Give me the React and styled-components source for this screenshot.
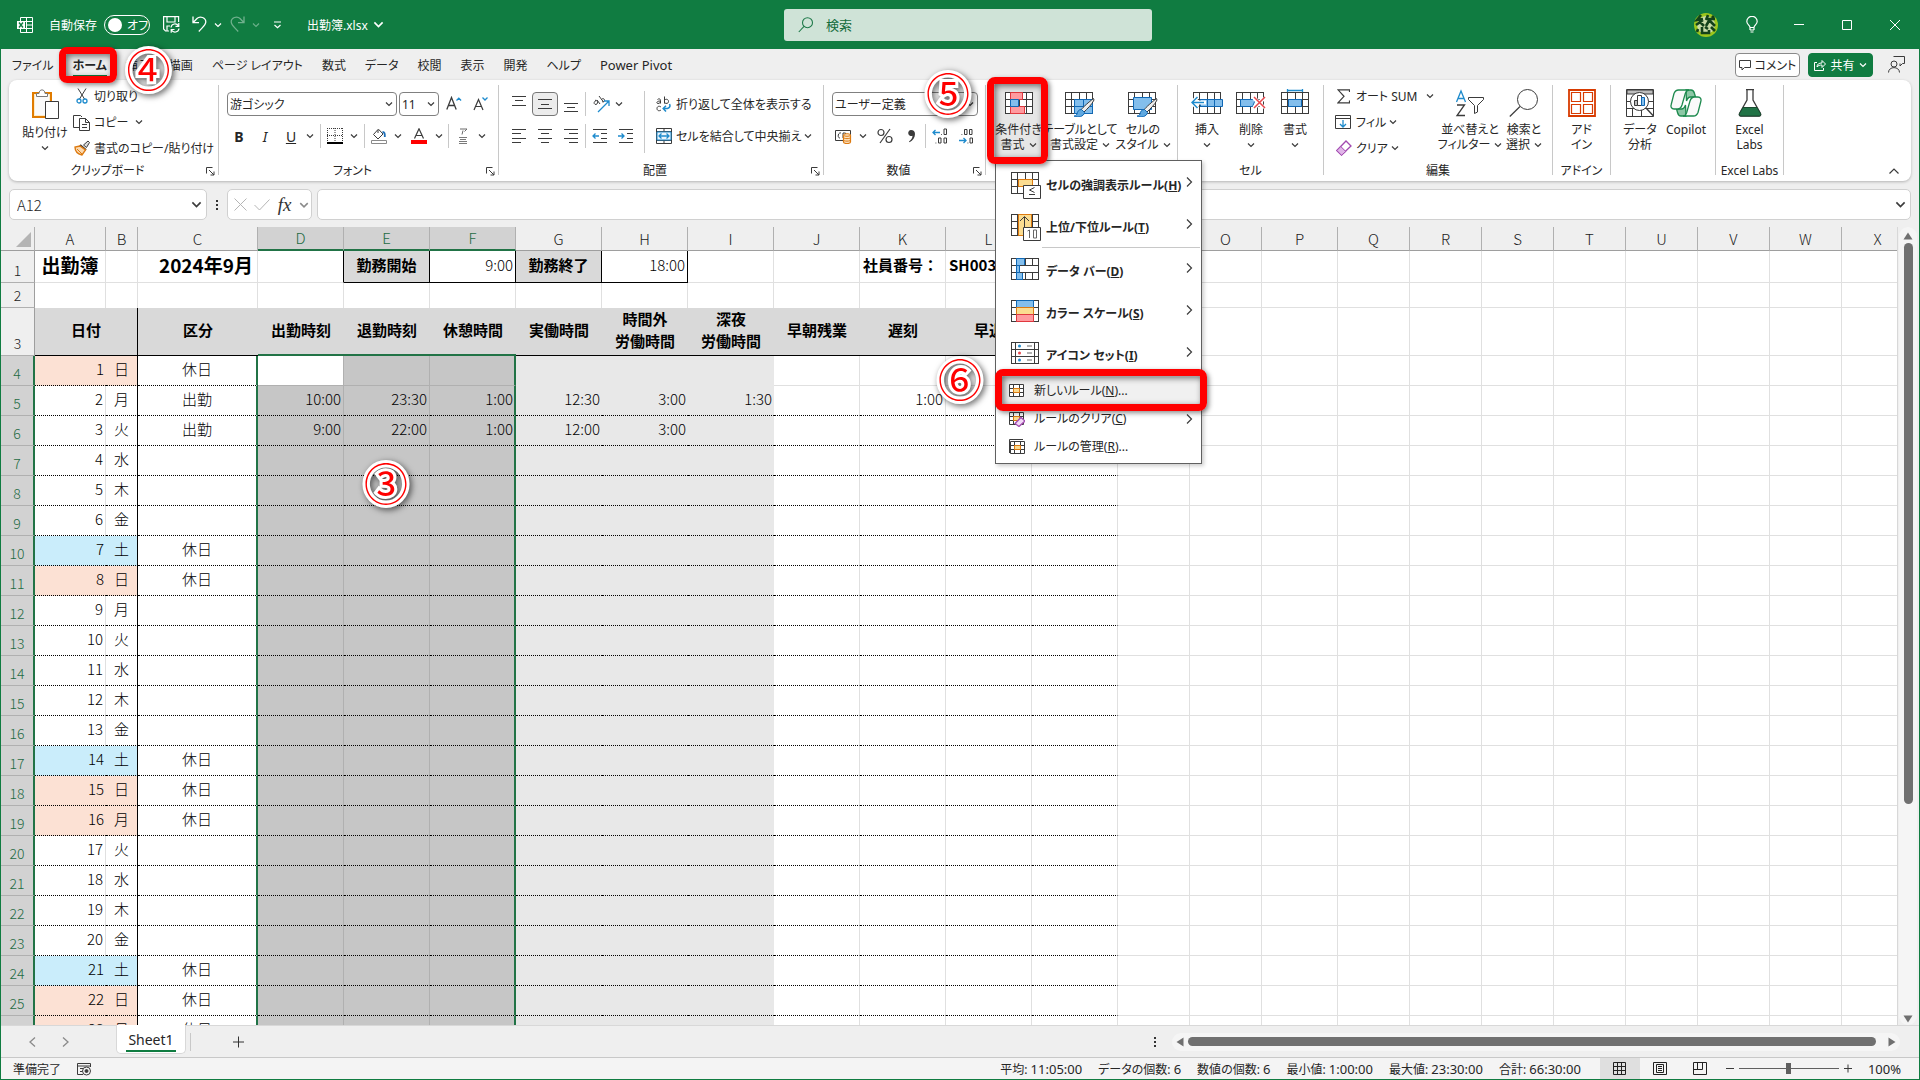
import styled, { createGlobalStyle, css } from "styled-components";

const GREEN = "#107c41";
const INK = "#3b3b3b";

const GlobalStyle = createGlobalStyle`
  * { box-sizing: border-box; }
  body {
    margin: 0;
    color: #262626;
    background: #efefef;
    font-family: "Noto Sans", "Noto Sans CJK JP", sans-serif;
    font-size: 12px;
    font-feature-settings: "palt";
  }
  button, input, select {
    margin: 0;
    padding: 0;
    border: 0;
    background: none;
    color: inherit;
    font: inherit;
    font-feature-settings: inherit;
  }
`;

/* ---------- icons ---------- */

const Svg = ({ w = 16, h = 16, children }) => (
  <svg width={w} height={h} viewBox={`0 0 ${w} ${h}`} fill="none" stroke={INK} aria-hidden="true">
    {children}
  </svg>
);

const Chevron = ({ size = 8, color = INK }) => (
  <svg width={size} height={size} viewBox="0 0 8 8" fill="none" stroke={color} strokeWidth="1.2" aria-hidden="true">
    <path d="M1 2.5 4 5.5 7 2.5" />
  </svg>
);

const ExcelLogo = () => (
  <svg width="16" height="16" viewBox="0 0 16 16" fill="none" stroke="#fff" aria-hidden="true">
    <path d="M3.5 4V.5h12v15h-12V12M9.5.5v15M3.5 4.5h12M9 8h6.5M3.5 11.5h12" />
    <path d="M0 4h8v8H0z" fill="#fff" stroke="none" />
    <path d="m2 5.5 4 5M6 5.5l-4 5" stroke={GREEN} strokeWidth="1.4" />
  </svg>
);

const SaveIcon = () => (
  <svg width="17" height="17" viewBox="0 0 17 17" fill="none" stroke="#fff" strokeWidth="1.2" aria-hidden="true">
    <path d="M6 15H2.5L.6 13V.6h15V6M4 .6V6h8V.6M4 15V10h3" />
    <path d="M8 11.5a4 4 0 0 1 7.5-1.5M15.8 7v3.3h-3.3M16 12.5A4 4 0 0 1 8.5 14M8.2 16.8v-3.3h3.3" />
  </svg>
);

const UndoIcon = ({ flip }) => (
  <svg width="15" height="17" viewBox="0 0 15 17" fill="none" stroke="#fff" strokeWidth="1.3" opacity={flip ? 0.4 : 1} aria-hidden="true">
    {flip ? (
      <path d="M14 .5v6.2H8M13.8 6.5 10 2.5C7-.3 1.2 1.5 1.2 6c0 3 3 5 7 9.5" />
    ) : (
      <path d="M1 .5v6.2h6M1.2 6.5 5 2.5c3-2.8 8.8-1 8.8 3.5 0 3-3 5-7 9.5" />
    )}
  </svg>
);

const CustomizeIcon = () => (
  <svg width="9" height="8" viewBox="0 0 9 8" fill="none" stroke="#fff" strokeWidth="1.2" aria-hidden="true">
    <path d="M1 1h7M1.5 4 4.5 6.8 7.5 4" />
  </svg>
);

const SearchIcon = () => (
  <svg width="16" height="16" viewBox="0 0 16 16" fill="none" stroke="#1f7a4a" strokeWidth="1.1" aria-hidden="true">
    <circle cx="9.5" cy="5.7" r="5" />
    <path d="M6 9.3.8 15" />
  </svg>
);

const Avatar = () => (
  <svg width="24" height="24" viewBox="0 0 24 24" fill="none" role="img" aria-label="アカウント">
    <circle cx="12" cy="12" r="12" fill="#9dc61c" />
    <circle cx="12" cy="12" r="9" fill="#c9dba8" />
    <path
      d="M7 2 3 7l6-1M9 7l-7 5M5 8l5 5M14 2l-2 5M12 6h9M16 6l-4 7M15 7l6 6M4 16l-1 3M8 14v6h7v-3M11 14l3 2M17 14l4 4M4 5l3 2M18 3l2 2"
      stroke="#14421a"
      strokeWidth="2.6"
    />
  </svg>
);

const BulbIcon = () => (
  <svg width="12" height="17" viewBox="0 0 12 17" fill="none" stroke="#fff" strokeWidth="1.2" aria-hidden="true">
    <path d="M4 11.5C4 9 .8 8.5.8 5.5a5.2 5.2 0 0 1 10.4 0C11.2 8.5 8 9 8 11.5zM4 14h4M4.5 16h3M4 11.5V14M8 11.5V14" />
  </svg>
);

const PasteIcon = () => (
  <Svg w={28} h={31}>
    <path d="M2 4h18v24H2z" stroke="#e07b00" strokeWidth="2" fill="#fdebc8" />
    <path d="M4 6h14v20H4z" fill="#fafafa" stroke="none" />
    <path d="M5.5 7.5V4.5H8C8-.3 14-.3 14 4.5h2.5v3z" fill="#fff" stroke="#7a7a7a" />
    <path d="M14.5 12.5h13v17h-13z" fill="#fff" />
  </Svg>
);

const CutIcon = () => (
  <Svg w={12} h={16}>
    <path d="M2 .5 8.5 11M10 .5 3.5 11" />
    <circle cx="3" cy="13" r="2" stroke="#1e8bcd" strokeWidth="1.3" />
    <circle cx="9" cy="13" r="2" stroke="#1e8bcd" strokeWidth="1.3" />
  </Svg>
);

const CopyIcon = () => (
  <Svg w={17} h={17}>
    <path d="M6 13.5H.5v-12h7L9 3" />
    <path d="M6.5 4.5h6l4 4v8h-10zM12.5 4.5v4h4M9 10.5h5M9 13.5h5" fill="#fff" />
  </Svg>
);

const BrushIcon = () => (
  <Svg w={16} h={16}>
    <path d="m9.5 5 4.5-4 1.5 1.5-3 5z" fill="#ddd" />
    <path d="m6 5 6 5" strokeWidth="2" />
    <path d="M6 6 1 7c0 4 3 7 7 8l3.500-5z" fill="#fbd9b0" stroke="#dd7a10" strokeWidth="1.4" />
    <path d="m3 9 5 5" stroke="#dd7a10" />
  </Svg>
);

const GrowFont = ({ down }) => (
  <Svg w={16} h={16}>
    {down ? (
      <>
        <path d="M1 14 5.5 3.5 10 14M2.5 10.500h6" strokeWidth="1.2" />
        <path d="m9.5 1.5 2.5 2.5 2.5-2.5" stroke="#1e8bcd" strokeWidth="1.3" />
      </>
    ) : (
      <>
        <path d="M.8 13.5 5.5 1.5l4.7 12M2.5 9.5h6" strokeWidth="1.3" />
        <path d="m10.5 4.5 2.3-2.3 2.3 2.3" stroke="#1e8bcd" strokeWidth="1.3" />
      </>
    )}
  </Svg>
);

const BorderIcon = () => (
  <Svg w={16} h={16}>
    <path d="M.5 0v14M15.5 0v14M8 0v14M0 .5h16M0 7.5h16" strokeDasharray="1 1" />
    <path d="M0 15h16" stroke="#000" strokeWidth="2" />
  </Svg>
);

const FillIcon = () => (
  <Svg w={16} h={16}>
    <path d="m7 1.5-4.5 5L7 11l5-5L7.5 1.2M7 1.5V5" />
    <path d="M11.5 4c2 0 2.5 1.5 2.3 5" stroke="#1e6fb8" strokeWidth="1.8" />
    <path d="M.5 12.5h15v3H.5z" stroke="#8a8a8a" fill="#fff" />
  </Svg>
);

const FontColorIcon = () => (
  <Svg w={16} h={16}>
    <path d="M3.5 10.5 8 .8l4.5 9.7M5 7.5h6" strokeWidth="1.2" />
    <path d="M0 12h16v4H0z" fill="#f00" stroke="none" />
  </Svg>
);

const RubyIcon = () => (
  <Svg w={10} h={16}>
    <path d="M2 1h7L6.500 3.500M5 2.500 4 6.500" stroke="#6a6a6a" />
    <path d="M1 9.500h8M2 11.500h6M1 13.500h8M1 15.500h8" stroke="#7a7a7a" shapeRendering="crispEdges" />
  </Svg>
);

const LINES = {
  left: "M1 1.5h14M1 5.5h9M1 10.5h14M1 14.5h9",
  center: "M1 1.5h14M4 5.5h8M1 10.5h14M4 14.5h8",
  right: "M1 1.5h14M6 5.5h9M1 10.5h14M6 14.5h9",
  vtop: "M1 .5h14M4 4.5h8M1 9.5h14",
  vmid: "M1 3.5h14M4 8.5h8M1 12.5h14",
  vbottom: "M1 7.5h14M4 11.5h8M1 15.5h14",
};

const LinesIcon = ({ kind }) => (
  <Svg>
    <path d={LINES[kind]} shapeRendering="crispEdges" />
  </Svg>
);

const IndentIcon = ({ out }) => (
  <Svg>
    <path d="M1 1.5h14M9 5.5h6M9 10.5h6M1 14.5h14" shapeRendering="crispEdges" />
    <path d={out ? "M7 8H1M3.500 5.500 1 8l2.500 2.500" : "M0 8h6M3.500 5.500 6 8l-2.500 2.500"} stroke="#1e8bcd" strokeWidth="1.3" />
  </Svg>
);

const OrientIcon = () => (
  <Svg w={17} h={17}>
    <path d="M3 4.500c-2 1-2.500 3-1 3.800s3-1 2.500-2.500S3 4 2 4.500M4 4l3 4M6 0l4.500 6M8.500 3.500c1-1.500 3-1 3 .800s-2 2-2.500 1" />
    <path d="M5 16 15.500 5.500M11 5h5v5" stroke="#1e8bcd" strokeWidth="1.3" />
  </Svg>
);

const WrapIcon = () => (
  <Svg w={16} h={17}>
    <path d="M1.500 3.500c1-1 3-1 3 1v3M4.500 5c-4-.2-4.500 2.500-2.500 2.500 1.500 0 2.500-1 2.500-2M8.500.5v7M8.500 4c2-1.500 4-.5 4 1.500s-2 2.500-4 1.300M5 11c-2-1.500-4-.5-4 1.500s2 3 4 1.500" />
    <path d="M13.500 8c1.500 3-.5 5-6 4.500M10 9.800l-2.800 2.700 2.800 3" stroke="#1e8bcd" strokeWidth="1.5" />
  </Svg>
);

const MergeIcon = () => (
  <Svg>
    <path d="M.5.5h15v15H.5zM.5 3.5h15M.5 12.5h15M8 0v3M8 13v3" />
    <path d="M1 4h14v8H1z" fill="#eaf4fb" stroke="#1e8bcd" />
    <path d="M3 8h10M5.5 5.500 3 8l2.500 2.500M10.500 5.500 13 8l-2.500 2.500" stroke="#1e8bcd" strokeWidth="1.3" />
  </Svg>
);

const CurrencyIcon = () => (
  <Svg w={18} h={16}>
    <path d="M.5 2.5h15v10H.5zM6 5c-3-1-4 5-1 5M8 10V5h2.500v2.500H8" />
    <path d="M8.500 7v7c0 2 7 2 7 0V7" fill="#fce3c3" stroke="#dd7a10" strokeWidth="1.2" />
    <ellipse cx="12" cy="7" rx="3.5" ry="1.3" fill="#fce3c3" stroke="#dd7a10" />
    <path d="M8.500 9.500c0 1.500 7 1.500 7 0M8.500 12c0 1.500 7 1.500 7 0" stroke="#dd7a10" />
  </Svg>
);

const PercentIcon = () => (
  <Svg>
    <circle cx="4" cy="4.5" r="3" strokeWidth="1.2" />
    <circle cx="12" cy="11.5" r="3" strokeWidth="1.2" />
    <path d="M13 1 3 15" strokeWidth="1.2" />
  </Svg>
);

const CommaIcon = () => (
  <Svg w={9} h={14}>
    <path d="M4 1a3 3 0 1 0 1.500 5.700C5.500 9 4 11 2 12.500l.5.8C6 11.500 8 8.500 8 5 8 2.500 6.500 1 4 1z" fill={INK} stroke="none" />
  </Svg>
);

const DecimalIcon = ({ less }) => (
  <Svg>
    {less ? (
      <>
        <path d="M3.500 6.500h.8M6.500 1.500H9v5H6.500zM11.500 1.500H14v5h-2.500zM12 10h2.500v5H12zM9.500 15h.8" />
        <path d="M1 12.500h7M5.500 10 8 12.500 5.500 15" stroke="#1e8bcd" strokeWidth="1.3" />
      </>
    ) : (
      <>
        <path d="M9 6.500h.8M12 1h2.500v5.500H12zM3.500 15h.8M6.500 10H9v5H6.500zM12 10h2.500v5H12z" />
        <path d="M8 4.500H1M3.500 2 1 4.500 3.500 7" stroke="#1e8bcd" strokeWidth="1.3" />
      </>
    )}
  </Svg>
);

const Grid = () => (
  <path
    d="M.5.5h27v21H.5zM.5 7.5h27M.5 14.5h27M6.5.5v21M14.5.5v21M21.5.5v21"
    fill="#fff"
    shapeRendering="crispEdges"
  />
);

const CondIcon = () => (
  <Svg w={28} h={28}>
    <g transform="translate(0 3)">
      <Grid />
      <path d="M5.5.5h12v7h-12zM5.5 14.5h14v7h-14z" fill="#ff9a9f" stroke="#e0383e" />
      <path d="M5.5 7.5h8v7h-8z" fill="#83beec" stroke="#1068b5" />
    </g>
  </Svg>
);

const BrushOver = () => (
  <>
    <path d="M28.5 9.500C24 13 18 18 16 21l2.500 2.500C22 20 27 15.500 29 11z" fill="#eee" />
    <path d="M16.500 20.500c-3 0-4 2-4.500 4.500-.5 1.500-2 2-3 2 4 2 10 .5 10.500-3.500z" fill="#5fa8df" stroke="#1068b5" />
  </>
);

const TableFormatIcon = () => (
  <Svg w={30} h={28}>
    <g transform="translate(0 3)">
      <Grid />
      <path d="M9.500 7.500h18v14h-18zM9.500 14.500h18M18.500 7.500v14" fill="#83beec" stroke="#1068b5" />
    </g>
    <BrushOver />
  </Svg>
);

const CellStyleIcon = () => (
  <Svg w={30} h={28}>
    <g transform="translate(0 3)">
      <Grid />
      <path d="M5.5 5.5h18v12h-18z" fill="#83beec" stroke="#1068b5" />
    </g>
    <BrushOver />
  </Svg>
);

const InsertIcon = () => (
  <Svg w={32} h={28}>
    <g transform="translate(2 3)">
      <Grid />
      <path d="M7.500 7.500h22v7h-22zM14.500 7.500v7M21.500 7.500v7" fill="#83beec" stroke="#1068b5" />
    </g>
    <path d="M15 13.500H1M6.500 8 1 13.500 6.500 19" stroke="#fff" strokeWidth="4" />
    <path d="M13 13.500H1M6.500 8 1 13.500 6.500 19" stroke="#1e8bcd" strokeWidth="1.5" />
  </Svg>
);

const DeleteIcon = () => (
  <Svg w={30} h={28}>
    <g transform="translate(0 3)">
      <Grid />
      <path d="M4.500 7.500h15l-3 7h-12z" fill="#83beec" stroke="#1068b5" />
    </g>
    <path d="m18 9 10 10M28 9 18 19" stroke="#fff" strokeWidth="4" />
    <path d="m18 8 11 11M29 8 18 19" stroke="#e8474c" strokeWidth="1.5" />
  </Svg>
);

const FormatIcon = () => (
  <Svg w={28} h={28}>
    <path d="M6.500 1.500h15M6.500-1v4M21.500-1v4" stroke="#1e8bcd" strokeWidth="1.3" />
    <g transform="translate(0 3)">
      <Grid />
      <path d="M7.500 7.500h13v7h-13z" fill="#83beec" stroke="#1068b5" />
    </g>
  </Svg>
);

const SigmaIcon = () => (
  <Svg w={13} h={15}>
    <path d="M12.500 3V.8H1l6 6.500-6 6.500h11.500v-2.300" strokeWidth="1.2" />
  </Svg>
);

const FillDownIcon = () => (
  <Svg w={17} h={16}>
    <path d="M.5 1.5h15v13H.5zM.5 4.500h15" />
    <path d="M8 6v7M5 10l3 3 3-3" stroke="#1e8bcd" strokeWidth="1.3" />
  </Svg>
);

const EraserIcon = () => (
  <Svg>
    <path d="M.8 10.500 10 1l5 5-9.500 9z" fill="#fff" stroke="#a24ab0" strokeWidth="1.3" />
    <path d="m.8 10.500 4-4 5 5-4.300 3.800z" fill="#e0b5e8" stroke="#a24ab0" />
  </Svg>
);

const SortIcon = () => (
  <Svg w={30} h={28}>
    <path d="m1.500 13 4.500-11 4.500 11M3 9.500h6" stroke="#1e8bcd" strokeWidth="1.3" />
    <path d="M2 16h7.500L2 26.500h8" strokeWidth="1.3" />
    <path d="M13.500 8.500h15v2l-6 6V23l-3 1.500v-8l-6-6z" />
  </Svg>
);

const FindIcon = () => (
  <Svg w={30} h={28}>
    <circle cx="18.5" cy="10.5" r="10" />
    <path d="M11 17.500.8 27.500" strokeWidth="1.2" />
  </Svg>
);

const AddinIcon = () => (
  <Svg w={28} h={28}>
    <path d="M1 1h26v26H1z" stroke="#d83b01" strokeWidth="1.8" />
    <path d="M3.500 3.500h9v9h-9zM15.500 3.500h9v9h-9zM3.500 15.500h9v9h-9zM15.500 15.500h9v9h-9z" stroke="#d83b01" strokeWidth="1.2" />
  </Svg>
);

const AnalyzeIcon = () => (
  <Svg w={28} h={28}>
    <path d="M.5.5h27v27H.5zM.5 12.500h27M.5 19.500h27M6.500 20v8M15.500 20v8" />
    <path d="M1 1h26v4H1z" fill="#bdbdbd" />
    <circle cx="13.5" cy="12.5" r="9" fill="#fff" />
    <path d="M8.500 11.500h3v5h-3z" fill="#bbb" />
    <path d="M11.500 6.500h4v10h-4z" fill="#fff" />
    <path d="M15.500 8.500h3v8h-3z" fill="#83beec" stroke="#1068b5" />
    <path d="m20 19 7.500 8" strokeWidth="1.4" />
  </Svg>
);

const CopilotIcon = () => (
  <svg width="32" height="28" viewBox="0 0 32 28" fill="#fafafa" stroke="#1d8a4e" strokeWidth="1.3" aria-hidden="true">
    <path d="M16 1h5c2 0 3 1.500 3.500 3.500L25.500 8h-5c-2 0-3 1-4 4z" fill="#8cc7a5" />
    <path d="M16 27h-5c-2 0-3-1.500-3.500-3.500L6.500 20h5c2 0 3-1 4-4z" fill="#8cc7a5" />
    <path d="M8.500 1H19c-2 0-3 1.500-3.700 3.500L12 16c-.8 2.500-2 4-4.500 4H4c-2.500 0-3.500-2-2.800-4.500L4 4.500C5 2 6.500 1 8.500 1z" />
    <path d="M23.500 27H13c2 0 3-1.500 3.700-3.500L20 12c.8-2.500 2-4 4.500-4H28c2.500 0 3.500 2 2.800 4.500L28 23.500c-1 2.500-2.500 3.500-4.500 3.500z" />
  </svg>
);

const LabsIcon = () => (
  <Svg w={26} h={28}>
    <path d="M9 .7h8M10 1v10L2.500 24.500C2 26 2.500 27 4 27h18c1.500 0 2-1 1.500-2.500L16 11V1" strokeWidth="1.3" />
    <path d="M6 18.500h14l3.500 6c.5 1.500 0 2.500-1.500 2.500H4c-1.500 0-2-1-1.500-2.500z" fill="#217346" stroke="#1b4a30" />
  </Svg>
);

const LauncherIcon = () => (
  <Svg w={9} h={9}>
    <path d="M.5 6.500v-6h6M3 3l5 5M8 4.500V8H4.500" />
  </Svg>
);

const RuleGrid = ({ children }) => (
  <Svg w={30} h={28}>
    <Grid />
    {children}
  </Svg>
);

const HighlightRuleIcon = () => (
  <RuleGrid>
    <path d="M7.500 7.500h14v7h-14z" fill="#fbdc90" stroke="#dd7a10" />
    <path d="M12.500 13.500h17v13h-17z" fill="#fff" />
    <path d="m23.500 15.500-5 2.500 5 2.500M18 22.500h6" />
  </RuleGrid>
);

const TopRuleIcon = () => (
  <RuleGrid>
    <path d="M7.500.5h13v21h-13z" fill="#fbdc90" stroke="#dd7a10" />
    <path d="M13.500 14V3M9 7l4.500-4.500L18 7" />
    <path d="M12.500 13.500h17v13h-17z" fill="#fff" />
    <path d="m16.500 17 2-1v8M22.500 16h3v8h-3z" stroke="#666" />
  </RuleGrid>
);

const DataBarIcon = () => (
  <RuleGrid>
    <path d="M9 7.500h13v7H9z" fill="#fff" stroke="none" />
    <path d="M5.500.5h8v7h-8zM5.500 7.500h3v7h-3zM5.500 14.500h6v7h-6z" fill="#83beec" stroke="#1068b5" />
    <path d="M9 7.500h13M9 14.500h13" />
  </RuleGrid>
);

const ColorScaleIcon = () => (
  <RuleGrid>
    <path d="M5.500.5h17v7h-17z" fill="#83beec" stroke="#1068b5" />
    <path d="M5.500 7.500h17v7h-17z" fill="#fbdc90" stroke="#dd7a10" />
    <path d="M5.500 14.500h17v7h-17z" fill="#ff9a9f" stroke="#e0383e" />
  </RuleGrid>
);

const IconSetIcon = () => (
  <Svg w={30} h={28}>
    <path d="M.5.5h27v21H.5zM.5 7.5h27M.5 14.500h27M4.500.5v21M23.500.5v21" fill="#fff" shapeRendering="crispEdges" />
    <circle cx="8.5" cy="4" r="1.5" fill="#1e8bcd" stroke="none" />
    <circle cx="8.5" cy="11" r="1.5" fill="#e8474c" stroke="none" />
    <circle cx="8.5" cy="18" r="1.5" fill="#1e8bcd" stroke="none" />
    <path d="M16 4h5M16 11h5M16 18h5" stroke="#666" />
  </Svg>
);

const SmallRuleIcon = ({ kind }) => (
  <Svg>
    {kind === "manage" && <path d="M.5 14V.5H14" />}
    <g transform={kind === "manage" ? "translate(1 2)" : "translate(0 1)"}>
      <path d="M.5.5h14v12H.5zM.5 4.5h14M.5 8.500h14M4.500.5v12M10.500.5v12" fill="#fff" />
      <path d="M4.500 4.500h6v4h-6z" fill="#fbdc90" stroke="#dd7a10" />
    </g>
    {kind === "clear" && <path d="m6 12.500 6-6 4 3.500-6 5.500z" fill="#f3d9f7" stroke="#a24ab0" strokeWidth="1.3" />}
  </Svg>
);

/* ---------- window frame ---------- */

const Window = styled.div`
  display: flex;
  flex-direction: column;
  height: 100vh;
  overflow: hidden;
  border: 1px solid ${GREEN};
  border-top: 0;
  background: #efefef;
`;

const TitleBar = styled.header`
  display: grid;
  grid-template-columns: 1fr 368px 1fr;
  align-items: center;
  flex: none;
  height: 49px;
  padding-left: 16px;
  background: ${GREEN};
  color: #fff;
`;

const TitleSide = styled.div`
  display: flex;
  align-items: center;
  justify-content: ${(p) => (p.$end ? "flex-end" : "flex-start")};
  white-space: nowrap;
`;

const TitleButton = styled.button`
  display: flex;
  align-items: center;
  justify-content: center;
  width: ${(p) => p.$w}px;
  height: 32px;
`;

const FileName = styled.button`
  display: flex;
  align-items: center;
  gap: 5px;
  margin-left: 13px;
`;

const AutoSave = styled.label`
  display: flex;
  align-items: center;
  gap: 7px;
  margin: 0 8px 0 16px;
`;

const Toggle = styled.span`
  display: flex;
  align-items: center;
  gap: 5px;
  width: 46px;
  height: 20px;
  padding-left: 3px;
  border: 1px solid #fff;
  border-radius: 10px;

  &::before {
    content: "";
    width: 14px;
    height: 14px;
    border-radius: 50%;
    background: #fff;
  }

  input {
    position: absolute;
    opacity: 0;
  }
`;

const SearchBox = styled.label`
  display: flex;
  align-items: center;
  gap: 12px;
  height: 32px;
  padding: 0 14px;
  border-radius: 3px;
  background: #cfe3d7;
  color: #146c3c;

  input {
    flex: 1;
    font-size: 13px;
    outline: 0;
  }
  input::placeholder {
    color: #146c3c;
    opacity: 1;
  }
`;

/* ---------- tabs ---------- */

const TabRow = styled.nav`
  display: flex;
  align-items: center;
  flex: none;
  height: 31px;
  padding: 0 13px 0 11px;
`;

const Tab = styled.button`
  height: 24px;
  margin-right: 19px;
  font-size: ${(p) => (p.$latin ? 13 : 12)}px;
  white-space: nowrap;

  ${(p) =>
    p.$active &&
    css`
      font-weight: bold;
      box-shadow: inset 0 -2px ${GREEN};
    `}
`;

const TabTools = styled.div`
  display: flex;
  align-items: center;
  gap: 8px;
  margin-left: auto;
`;

const PillButton = styled.button`
  display: flex;
  align-items: center;
  justify-content: center;
  gap: 4px;
  width: 65px;
  height: 24px;
  border: 1px solid ${(p) => (p.$solid ? GREEN : "#8a8a8a")};
  border-radius: 4px;
  background: ${(p) => (p.$solid ? GREEN : "#fff")};
  color: ${(p) => (p.$solid ? "#fff" : "#262626")};
  white-space: nowrap;
`;

const PersonButton = styled.button`
  display: flex;
  justify-content: center;
  width: 20px;
  margin-left: 5px;
`;

/* ---------- call-outs ---------- */

const Frame = styled.span`
  position: absolute;
  z-index: 5;
  inset: ${(p) => p.$inset};
  border: 7px solid #f00;
  border-radius: 8px;
  box-shadow: 2px 2px 5px rgba(0, 0, 0, 0.45), inset 2px 2px 6px rgba(0, 0, 0, 0.55);
  pointer-events: none;
`;

const Step = styled.span`
  position: absolute;
  z-index: 6;
  left: ${(p) => p.$x}px;
  top: ${(p) => p.$y}px;
  color: #f00;
  font: 400 44px/44px "Noto Sans CJK JP", sans-serif;
  font-feature-settings: normal;
  -webkit-text-stroke: 6px #fff;
  paint-order: stroke fill;
  filter: drop-shadow(2px 2px 3px rgba(0, 0, 0, 0.6));
  pointer-events: none;
`;

/* ---------- ribbon ---------- */

const Ribbon = styled.section`
  display: flex;
  flex: none;
  height: 101px;
  margin: 0 8px;
  border-radius: 8px;
  background: #fff;
  box-shadow: 0 1px 3px rgba(0, 0, 0, 0.25);
`;

const GroupBox = styled.div`
  display: flex;
  flex-direction: column;
  flex: none;
  min-width: ${(p) => p.$w}px;
  padding: 3px 0 2px;
`;

const GroupBody = styled.div`
  display: flex;
  height: 78px;
  padding-left: ${(p) => p.$pad}px;
  justify-content: ${(p) => (p.$center ? "center" : "flex-start")};
`;

const GroupFoot = styled.div`
  display: flex;
  align-items: center;
  height: 18px;

  span {
    flex: 1;
    text-align: center;
    white-space: nowrap;
  }
`;

const Launcher = styled.button`
  display: flex;
  width: 12px;
  padding-top: 2px;
`;

const GroupRule = styled.div`
  width: 1px;
  margin: 5px 0 6px;
  background: #c8c8c8;
`;

const Group = ({ w, pad = 0, label, launcher, center, children }) => (
  <>
    <GroupBox $w={w}>
      <GroupBody $pad={pad} $center={center}>
        {children}
      </GroupBody>
      <GroupFoot>
        <span>{label}</span>
        {launcher && (
          <Launcher aria-label={`${label} の詳細`}>
            <LauncherIcon />
          </Launcher>
        )}
      </GroupFoot>
    </GroupBox>
    <GroupRule />
  </>
);

const BigButton = styled.button`
  display: flex;
  flex-direction: column;
  align-items: center;
  width: ${(p) => p.$w}px;
  height: 78px;
  padding-top: 6px;
  background: ${(p) => (p.$pressed ? "#e6e6e6" : "none")};
  line-height: 15px;
  white-space: nowrap;

  > svg:first-child {
    flex: none;
    margin-bottom: 5px;
  }
`;

const Line = styled.span`
  display: flex;
  align-items: center;
  justify-content: center;
  gap: 4px;
  height: 15px;
`;

const Big = ({ w, icon, lines = [], drop, pressed }) => (
  <BigButton $w={w} $pressed={pressed}>
    {icon}
    {lines.map((text, i) => (
      <Line key={text}>
        {text}
        {drop === "inline" && i === lines.length - 1 && <Chevron />}
      </Line>
    ))}
    {drop === "below" && (
      <Line>
        <Chevron />
      </Line>
    )}
  </BigButton>
);

const Anchor = styled.div`
  position: relative;
`;

const SmallStack = styled.div`
  display: flex;
  flex-direction: column;
  width: ${(p) => p.$w}px;
`;

const SmallButton = styled.button`
  display: flex;
  align-items: center;
  height: 26px;
  white-space: nowrap;

  > svg:last-child {
    margin-left: ${(p) => p.$gap}px;
  }
`;

const IconSlot = styled.span`
  display: flex;
  flex: none;
  justify-content: center;
  width: 17px;
  margin-right: 4px;
`;

const Small = ({ icon, label, drop, gap = 3 }) => (
  <SmallButton $gap={gap}>
    <IconSlot>{icon}</IconSlot>
    {label}
    {drop && <Chevron />}
  </SmallButton>
);

const ToolRows = styled.div`
  display: flex;
  flex-direction: column;
  gap: 8px;
  padding-top: 9px;
`;

const ToolRow = styled.div`
  display: flex;
  align-items: center;
  height: 24px;
`;

const Tool = styled.button`
  display: flex;
  align-items: center;
  justify-content: center;
  width: ${(p) => p.$w}px;
  height: 24px;
  border-radius: 4px;
  font-size: 14px;

  svg {
    flex: none;
  }

  ${(p) =>
    p.$on &&
    css`
      border: 1px solid #767676;
      background: #ececec;
    `}
`;

const ToolRule = styled.span`
  width: 1px;
  height: 24px;
  margin: 0 ${(p) => p.$m || 3}px;
  background: #c8c8c8;
`;

const BlockRule = styled.span`
  width: 1px;
  height: 62px;
  margin: 8px 10px 0 5px;
  background: #c8c8c8;
`;

const Combo = styled.label`
  display: flex;
  align-items: center;
  width: ${(p) => p.$w}px;
  height: 24px;
  margin-right: ${(p) => p.$gap || 0}px;
  padding: 0 3px 0 2px;
  border: 1px solid #808080;
  border-radius: 4px;

  select {
    flex: 1;
    min-width: 0;
    appearance: none;
    outline: 0;
  }
`;

const CollapseButton = styled.button`
  display: flex;
  align-self: flex-end;
  margin-left: auto;
  padding: 0 12px 7px;
`;

/* ---------- rule menu ---------- */

const Menu = styled.div`
  position: absolute;
  z-index: 4;
  top: 77px;
  left: 0;
  width: 207px;
  padding: 2px 0;
  border: 1px solid #606060;
  background: #fff;
  box-shadow: 2px 2px 4px rgba(0, 0, 0, 0.2);
`;

const MenuLarge = styled.button`
  display: flex;
  width: 100%;
  height: 42px;
  padding: 9px 8px 0 15px;
  font-weight: bold;
  line-height: 28px;
  text-align: left;
  white-space: nowrap;

  svg {
    flex: none;
  }
  span {
    flex: 1;
    margin-left: 5px;
  }
`;

const MenuSmall = styled(MenuLarge)`
  align-items: center;
  height: 28px;
  padding: 0 8px 0 13px;
  font-weight: normal;
  background: ${(p) => (p.$hover ? "#f0f0f0" : "none")};

  span {
    margin-left: 9px;
  }
`;

const MenuRule = styled.div`
  height: 1px;
  margin: 0 1px 1px 46px;
  background: #c8c8c8;
`;

const SmallRules = styled.div`
  position: relative;
  padding-top: 2px;
`;

const Arrow = () => (
  <Svg w={7} h={20}>
    <path d="m1 5.500 4.500 4.500L1 14.500" strokeWidth="1.2" />
  </Svg>
);

const LARGE_RULES = [
  [HighlightRuleIcon, "セルの強調表示ルール", "H"],
  [TopRuleIcon, "上位/下位ルール", "T"],
  null,
  [DataBarIcon, "データ バー", "D"],
  [ColorScaleIcon, "カラー スケール", "S"],
  [IconSetIcon, "アイコン セット", "I"],
];

const RuleMenu = () => (
  <Menu role="menu">
    {LARGE_RULES.map((rule) => {
      if (!rule) return <MenuRule key="rule" />;
      const [Icon, text, key] = rule;
      return (
        <MenuLarge key={key} role="menuitem">
          <Icon />
          <span>
            {text}(<u>{key}</u>)
          </span>
          <Arrow />
        </MenuLarge>
      );
    })}
    <SmallRules>
      <MenuSmall role="menuitem" $hover>
        <SmallRuleIcon />
        <span>
          新しいルール(<u>N</u>)...
        </span>
      </MenuSmall>
      <Frame $inset="-6px -6px -6px -1px" />
      <Step $x={-58} $y={-19}>⑥</Step>
    </SmallRules>
    <MenuSmall role="menuitem">
      <SmallRuleIcon kind="clear" />
      <span>
        ルールのクリア(<u>C</u>)
      </span>
      <Arrow />
    </MenuSmall>
    <MenuSmall role="menuitem">
      <SmallRuleIcon kind="manage" />
      <span>
        ルールの管理(<u>R</u>)...
      </span>
    </MenuSmall>
  </Menu>
);

/* ---------- formula bar ---------- */

const FormulaBar = styled.div`
  display: flex;
  align-items: center;
  flex: none;
  padding: 8px 8px 7px;
`;

const Field = styled.div`
  display: flex;
  align-items: center;
  flex: ${(p) => (p.$grow ? 1 : "none")};
  width: ${(p) => p.$w}px;
  height: 31px;
  padding: 0 4px 0 7px;
  border: 1px solid #d0d0d0;
  border-radius: 5px;
  background: #fff;

  input {
    flex: 1;
    min-width: 0;
    font: 300 15px "Noto Sans CJK JP", sans-serif;
    outline: 0;
  }
  button {
    display: flex;
  }
`;

const FxField = styled(Field)`
  justify-content: space-between;
  padding: 0 2px 0 6px;
  margin-right: 5px;
`;

const Fx = styled.i`
  color: #333;
  font: italic 19px "Liberation Serif", serif;
`;

const Dots = styled.span`
  display: flex;
  justify-content: center;
  width: 20px;
`;

const DotsIcon = () => (
  <svg width="2" height="10" viewBox="0 0 2 10" fill="#333" aria-hidden="true">
    <path d="M0 0h2v2H0zM0 4h2v2H0zM0 8h2v2H0z" />
  </svg>
);

/* ---------- sheet ---------- */

const SheetArea = styled.main`
  position: relative;
  display: flex;
  flex: 1;
  min-height: 0;
`;

const SheetClip = styled.div`
  flex: 1;
  min-width: 0;
  overflow: hidden;
  border-right: 1px solid #d8d8d8;
  background: #fff;
`;

const Table = styled.table`
  width: 1913px;
  table-layout: fixed;
  border-collapse: separate;
  border-spacing: 0;
  color: #000;
  font: 300 15px/26px "Noto Sans CJK JP", sans-serif;
  font-feature-settings: normal;

  th, td {
    padding: 0;
    overflow: hidden;
    white-space: nowrap;
  }
`;

const ColHead = styled.th`
  height: 24px;
  border-right: 1px solid #b0b0b0;
  border-bottom: ${(p) => (p.$on ? "2px solid #217346" : "1px solid #9e9e9e")};
  background: ${(p) => (p.$on ? "#d2d2d2" : "#efefef")};
  color: ${(p) => (p.$on ? "#1e6b43" : "#222")};
  font-weight: 300;
  line-height: 20px;
`;

const Corner = styled(ColHead)`
  svg {
    display: block;
    margin: 1px 0 0 14px;
  }
`;

const RowHead = styled.th`
  height: ${(p) => p.$h}px;
  vertical-align: bottom;
  border-right: ${(p) => (p.$on ? "2px solid #217346" : "1px solid #9e9e9e")};
  border-bottom: 1px solid #b0b0b0;
  background: ${(p) => (p.$on ? "#d2d2d2" : "#efefef")};
  color: ${(p) => (p.$on ? "#1e6b43" : "#222")};
  font-size: 14px;
  font-weight: 300;
  line-height: 24px;
`;

const FILLS = {
  head: "#d9d9d9",
  sun: "#fce1d4",
  sat: "#caedfb",
  picked: "#c6c6c6",
  calc: "#e8e8e8",
};

const EDGES = {
  grid: "1px solid #e0e0e0",
  black: "1px solid #000",
  dots: "1px dotted #000",
  green: "2px solid #217346",
  grey: "1px solid #b0b0b0",
  none: "0",
};

const Cell = styled.td`
  && {
    padding: 0 ${(p) => p.$pad ?? 2}px ${(p) => (p.$short ? 0 : 3)}px;
  }
  border-right: ${(p) => EDGES[p.$right || "grid"]};
  border-bottom: ${(p) => EDGES[p.$bottom || "grid"]};
  background: ${(p) => FILLS[p.$fill] || "#fff"};
  font-size: ${(p) => (p.$title ? 19 : 15)}px;
  font-weight: ${(p) => (p.$bold || p.$title ? 700 : 300)};
  line-height: ${(p) => (p.$head ? 22 : 26)}px;
  text-align: ${(p) => p.$align || "right"};
`;

const COLS = "ABCDEFGHIJKLMNOPQRSTUVWX".split("");
const WIDTHS = { A: 71, B: 32, C: 120, N: 72, P: 76 };
const colWidth = (c) => WIDTHS[c] || (c >= "D" && c <= "M" ? 86 : 72);

const HEADINGS = {
  C: "区分",
  D: "出勤時刻",
  E: "退勤時刻",
  F: "休憩時間",
  G: "実働時間",
  H: ["時間外", "労働時間"],
  I: ["深夜", "労働時間"],
  J: "早朝残業",
  K: "遅刻",
  L: "早退",
};

const TIMES = {
  2: { D: "10:00", E: "23:30", F: "1:00", G: "12:30", H: "3:00", I: "1:30", K: "1:00" },
  3: { D: "9:00", E: "22:00", F: "1:00", G: "12:00", H: "3:00" },
};

const HOLIDAYS = [16, 23];

const dayOf = (n) => {
  const week = (n - 1) % 7;
  const red = week === 0 || HOLIDAYS.includes(n);
  return {
    n,
    name: "日月火水木金土"[week],
    fill: red ? "sun" : week === 6 ? "sat" : undefined,
    kind: red || week === 6 ? "休日" : TIMES[n] ? "出勤" : "",
  };
};

const DAYS = Array.from({ length: 23 }, (_, i) => dayOf(i + 1));

const TopCells = () => (
  <>
    <Cell $title $align="center">出勤簿</Cell>
    <Cell />
    <Cell $title $pad={4}>2024年9月</Cell>
    <Cell $right="black" />
    <Cell $fill="head" $bold $align="center" $right="black" $bottom="black">勤務開始</Cell>
    <Cell $right="black" $bottom="black">9:00</Cell>
    <Cell $fill="head" $bold $align="center" $right="black" $bottom="black">勤務終了</Cell>
    <Cell $right="black" $bottom="black">18:00</Cell>
    <Cell />
    <Cell />
    <Cell $bold $align="left" $pad={3}>社員番号：</Cell>
    <Cell $bold $align="left" $pad={3}>SH003</Cell>
    {COLS.slice(12).map((c) => (
      <Cell key={c} />
    ))}
  </>
);

const dayCell = (day, c) => {
  const first = day.n === 1;
  const text = TIMES[day.n]?.[c];
  if (c >= "D" && c <= "F")
    return (
      <Cell
        key={c}
        $fill={first && c === "D" ? undefined : "picked"}
        $right={c === "F" ? "green" : "grey"}
        $bottom={first ? "grey" : "dots"}
        $pad={c === "F" ? 1 : 2}
      >
        {text}
      </Cell>
    );
  if (c >= "G" && c <= "I")
    return (
      <Cell key={c} $fill="calc" $right="none" $bottom={first ? "none" : "dots"}>
        {text}
      </Cell>
    );
  return (
    <Cell key={c} $bottom={c <= "M" && !first ? "dots" : "grid"}>
      {text}
    </Cell>
  );
};

const Sheet = () => (
  <Table>
    <colgroup>
      <col style={{ width: 34 }} />
      {COLS.map((c) => (
        <col key={c} style={{ width: colWidth(c) }} />
      ))}
    </colgroup>
    <thead>
      <tr>
        <Corner aria-label="すべて選択">
          <svg width="17" height="17" viewBox="0 0 17 17" aria-hidden="true">
            <path d="M16 1v15H1z" fill="#b4b4b4" />
          </svg>
        </Corner>
        {COLS.map((c) => (
          <ColHead key={c} $on={c >= "D" && c <= "F"}>{c}</ColHead>
        ))}
      </tr>
    </thead>
    <tbody>
      <tr>
        <RowHead $h={32}>1</RowHead>
        <TopCells />
      </tr>
      <tr>
        <RowHead $h={25}>2</RowHead>
        {COLS.map((c) => (
          <Cell key={c} $short $bottom={c <= "M" ? "none" : "grid"} />
        ))}
      </tr>
      <tr>
        <RowHead $h={48}>3</RowHead>
        <Cell colSpan={2} $head $fill="head" $bold $align="center" $right="black" $bottom="black">日付</Cell>
        {COLS.slice(2).map((c) => {
          if (c > "M") return <Cell key={c} />;
          const text = HEADINGS[c];
          return (
            <Cell
              key={c}
              $head
              $fill="head"
              $bold
              $align="center"
              $right="none"
              $bottom={c >= "D" && c <= "F" ? "green" : "black"}
            >
              {Array.isArray(text) ? (
                <>
                  {text[0]}
                  <br />
                  {text[1]}
                </>
              ) : (
                text
              )}
            </Cell>
          );
        })}
      </tr>
      {DAYS.map((day) => (
        <tr key={day.n}>
          <RowHead $h={30} $on>{day.n + 3}</RowHead>
          <Cell $fill={day.fill} $right={day.fill ? "none" : "grid"} $bottom="dots">{day.n}</Cell>
          <Cell $fill={day.fill} $align="center" $right="black" $bottom="dots">{day.name}</Cell>
          <Cell $align="center" $right="green" $bottom="dots">{day.kind}</Cell>
          {COLS.slice(3).map((c) => dayCell(day, c))}
        </tr>
      ))}
    </tbody>
  </Table>
);

const VScroll = styled.div`
  display: flex;
  flex-direction: column;
  align-items: center;
  gap: 3px;
  flex: none;
  width: 18px;
  margin: 0 2px 0 1px;
  padding: 5px 0 2px;
  border-radius: 9px;
  background: #f5f5f5;

  button {
    display: flex;
  }
`;

const VTrack = styled.div`
  flex: 1;
  width: 9px;

  &::before {
    content: "";
    display: block;
    height: 73%;
    border-radius: 5px;
    background: #707070;
  }
`;

const Triangle = ({ turn }) => (
  <svg width="10" height="8" viewBox="0 0 10 8" fill="#707070" transform={`rotate(${turn})`} aria-hidden="true">
    <path d="M5 .5 9.500 7.500H.5z" />
  </svg>
);

/* ---------- sheet tabs and status ---------- */

const SheetTabs = styled.footer`
  display: flex;
  align-items: center;
  flex: none;
  height: 32px;
  padding: 0 19px 0 15px;
  border-top: 1px solid #d8d8d8;
`;

const TabNav = styled.button`
  display: flex;
  justify-content: center;
  width: 33px;
`;

const SheetTab = styled.button`
  align-self: flex-start;
  width: 70px;
  height: 29px;
  margin: -1px 4px 0 34px;
  padding: 0 9px;
  border: 1px solid #d8d8d8;
  border-top: 0;
  border-radius: 0 0 5px 5px;
  background: #fff;
  font-size: 14px;

  span {
    display: block;
    height: 26px;
    border-bottom: 2px solid ${GREEN};
    line-height: 27px;
  }
`;

const AddTab = styled(TabNav)`
  width: 95px;
  border-left: 1px solid #c8c8c8;
`;

const HScroll = styled.div`
  display: flex;
  align-items: center;
  gap: 3px;
  width: 728px;
  height: 18px;
  margin-left: 16px;
  padding: 0 3px;
  border-radius: 9px;
  background: #f5f5f5;

  button {
    display: flex;
  }
`;

const HThumb = styled.div`
  flex: 1;
  height: 9px;
  margin-right: 8px;
  border-radius: 5px;
  background: #707070;
`;

const Spacer = styled.span`
  flex: 1;
`;

const StatusBar = styled.footer`
  display: flex;
  align-items: center;
  gap: 16px;
  flex: none;
  height: 22px;
  padding: 0 18px 0 12px;
  border-top: 1px solid #c8c8c8;
  background: #f4f4f4;
  white-space: nowrap;
`;

const Figure = styled.span`
  font-size: 13px;
`;

const Views = styled.div`
  display: flex;
  align-self: stretch;
  margin-left: 3px;
`;

const ViewButton = styled.button`
  display: flex;
  align-items: center;
  justify-content: center;
  width: 40px;
  background: ${(p) => (p.$on ? "#dfdfdf" : "none")};
`;

const Zoom = styled.div`
  display: flex;
  align-items: center;
  gap: 5px;
  margin-left: -10px;

  button {
    display: flex;
  }
  input {
    width: 100px;
    height: 12px;
    appearance: none;
    background: linear-gradient(#606060, #606060) center / 100% 1px no-repeat;
  }
  input::-webkit-slider-thumb {
    width: 5px;
    height: 11px;
    appearance: none;
    background: #606060;
  }
`;

const TABS = ["描画", "ページ レイアウト", "数式", "データ", "校閲", "表示", "開発", "ヘルプ"];

const STATS = [
  ["平均", "11:05:00"],
  ["データの個数", "6"],
  ["数値の個数", "6"],
  ["最小値", "1:00:00"],
  ["最大値", "23:30:00"],
  ["合計", "66:30:00"],
];

export default function App() {
  return (
    <>
      <GlobalStyle />
      <Window>
        <TitleBar>
          <TitleSide>
            <ExcelLogo />
            <AutoSave>
              自動保存
              <Toggle>
                <input type="checkbox" aria-label="自動保存" />
                オフ
              </Toggle>
            </AutoSave>
            <TitleButton $w={26} aria-label="保存"><SaveIcon /></TitleButton>
            <TitleButton $w={30} aria-label="元に戻す"><UndoIcon /></TitleButton>
            <TitleButton $w={8} aria-label="元に戻す一覧"><Chevron color="#fff" /></TitleButton>
            <TitleButton $w={30} aria-label="やり直し"><UndoIcon flip /></TitleButton>
            <TitleButton $w={8} aria-label="やり直し一覧"><Chevron color="#6bb08a" /></TitleButton>
            <TitleButton $w={34} aria-label="クイック アクセスのカスタマイズ"><CustomizeIcon /></TitleButton>
            <FileName>
              出勤簿.xlsx
              <Chevron size={11} color="#fff" />
            </FileName>
          </TitleSide>
          <SearchBox>
            <SearchIcon />
            <input type="search" placeholder="検索" aria-label="検索" />
          </SearchBox>
          <TitleSide $end>
            <TitleButton $w={46}><Avatar /></TitleButton>
            <TitleButton $w={46} aria-label="ヒント"><BulbIcon /></TitleButton>
            <TitleButton $w={48} aria-label="最小化">
              <svg width="10" height="10" stroke="#fff" aria-hidden="true"><path d="M0 4.500h10" /></svg>
            </TitleButton>
            <TitleButton $w={48} aria-label="最大化">
              <svg width="10" height="10" stroke="#fff" fill="none" aria-hidden="true"><path d="M.5.5h9v9h-9z" /></svg>
            </TitleButton>
            <TitleButton $w={48} aria-label="閉じる">
              <svg width="10" height="10" stroke="#fff" aria-hidden="true"><path d="m0 0 10 10M10 0 0 10" /></svg>
            </TitleButton>
          </TitleSide>
        </TitleBar>

        <TabRow>
          <Tab>ファイル</Tab>
          <Anchor>
            <Tab $active>ホーム</Tab>
            <Frame $inset="-6px 9px -6px -14px" />
            <Step $x={54} $y={-7}>④</Step>
          </Anchor>
          <Tab>挿入</Tab>
          {TABS.map((t) => (
            <Tab key={t}>{t}</Tab>
          ))}
          <Tab $latin>Power Pivot</Tab>
          <TabTools>
            <PillButton>
              <Svg w={12} h={12}><path d="M.5 1.500h11v7h-6L3 11V8.500H.5z" /></Svg>
              コメント
            </PillButton>
            <PillButton $solid>
              <svg width="12" height="12" viewBox="0 0 12 12" fill="none" stroke="#fff" aria-hidden="true">
                <path d="M3 3.500H.5v8h9V9M3 8c0-3 2-4 5-4V1.500L11.500 5 8 8.500V6C6 6 4 6.500 3 8z" />
              </svg>
              共有
              <Chevron color="#fff" />
            </PillButton>
            <PersonButton aria-label="プレゼンス">
              <Svg w={17} h={17}>
                <path d="M5.500.5h11v7h-2l-2.500 2.500V7.500" />
                <circle cx="6" cy="8" r="3" fill="#efefef" />
                <path d="M.5 16.500c0-6.500 11-6.500 11 0" />
              </Svg>
            </PersonButton>
          </TabTools>
        </TabRow>

        <Ribbon>
          <Group w={209} pad={8} label="クリップボード" launcher>
            <Big w={56} icon={<PasteIcon />} lines={["貼り付け"]} drop="below" />
            <SmallStack $w={130}>
              <Small icon={<CutIcon />} label="切り取り" />
              <Small icon={<CopyIcon />} label="コピー" drop gap={7} />
              <Small icon={<BrushIcon />} label="書式のコピー/貼り付け" />
            </SmallStack>
          </Group>

          <Group w={279} pad={8} label="フォント" launcher>
            <ToolRows>
              <ToolRow>
                <Combo $w={170} $gap={2}>
                  <select aria-label="フォント"><option>游ゴシック</option></select>
                  <Chevron />
                </Combo>
                <Combo $w={40}>
                  <select aria-label="フォント サイズ"><option>11</option></select>
                  <Chevron />
                </Combo>
                <Tool $w={30} aria-label="拡大"><GrowFont /></Tool>
                <Tool $w={24} aria-label="縮小"><GrowFont down /></Tool>
              </ToolRow>
              <ToolRow>
                <Tool $w={24}><b>B</b></Tool>
                <Tool $w={28}><i>I</i></Tool>
                <Tool $w={24}><u>U</u></Tool>
                <Tool $w={14} aria-label="下線の種類"><Chevron /></Tool>
                <ToolRule />
                <Tool $w={22} aria-label="罫線"><BorderIcon /></Tool>
                <Tool $w={15} aria-label="罫線の種類"><Chevron /></Tool>
                <ToolRule />
                <Tool $w={22} aria-label="塗りつぶし"><FillIcon /></Tool>
                <Tool $w={15} aria-label="塗りつぶしの色"><Chevron /></Tool>
                <Tool $w={28} aria-label="文字色"><FontColorIcon /></Tool>
                <Tool $w={12} aria-label="文字色の一覧"><Chevron /></Tool>
                <ToolRule />
                <Tool $w={22} aria-label="ふりがな"><RubyIcon /></Tool>
                <Tool $w={16} aria-label="ふりがなの設定"><Chevron /></Tool>
              </ToolRow>
            </ToolRows>
          </Group>

          <Group w={324} pad={7} label="配置" launcher>
            <ToolRows>
              <ToolRow>
                <Tool $w={26} aria-label="上揃え"><LinesIcon kind="vtop" /></Tool>
                <Tool $w={26} $on aria-label="上下中央"><LinesIcon kind="vmid" /></Tool>
                <Tool $w={26} aria-label="下揃え"><LinesIcon kind="vbottom" /></Tool>
                <ToolRule $m={1} />
                <Tool $w={28} aria-label="方向"><OrientIcon /></Tool>
                <Tool $w={8} aria-label="方向の一覧"><Chevron /></Tool>
              </ToolRow>
              <ToolRow>
                <Tool $w={26} aria-label="左揃え"><LinesIcon kind="left" /></Tool>
                <Tool $w={26} aria-label="中央揃え"><LinesIcon kind="center" /></Tool>
                <Tool $w={26} aria-label="右揃え"><LinesIcon kind="right" /></Tool>
                <ToolRule $m={1} />
                <Tool $w={26} aria-label="インデントを減らす"><IndentIcon out /></Tool>
                <Tool $w={26} aria-label="インデントを増やす"><IndentIcon /></Tool>
              </ToolRow>
            </ToolRows>
            <BlockRule />
            <ToolRows>
              <ToolRow><Small icon={<WrapIcon />} label="折り返して全体を表示する" /></ToolRow>
              <ToolRow><Small icon={<MergeIcon />} label="セルを結合して中央揃え" drop /></ToolRow>
            </ToolRows>
          </Group>

          <Group w={161} pad={8} label="数値" launcher>
            <ToolRows>
              <ToolRow>
                <Combo $w={146}>
                  <select aria-label="表示形式"><option>ユーザー定義</option></select>
                  <Chevron />
                  <Anchor>
                    <Step $x={-48} $y={-34}>⑤</Step>
                  </Anchor>
                </Combo>
              </ToolRow>
              <ToolRow>
                <Tool $w={24} aria-label="通貨"><CurrencyIcon /></Tool>
                <Tool $w={14} aria-label="通貨の一覧"><Chevron /></Tool>
                <Tool $w={30} aria-label="パーセント"><PercentIcon /></Tool>
                <Tool $w={22} aria-label="桁区切り"><CommaIcon /></Tool>
                <ToolRule />
                <Tool $w={22} aria-label="小数点以下を増やす"><DecimalIcon /></Tool>
                <Tool $w={30} aria-label="小数点以下を減らす"><DecimalIcon less /></Tool>
              </ToolRow>
            </ToolRows>
          </Group>

          <Group w={191} pad={9}>
            <Anchor>
              <Big w={47} icon={<CondIcon />} lines={["条件付き", "書式"]} drop="inline" pressed />
              <RuleMenu />
              <Frame $inset="-6px -6px -3px -8px" />
            </Anchor>
            <Big w={76} icon={<TableFormatIcon />} lines={["テーブルとして", "書式設定"]} drop="inline" />
            <Big w={50} icon={<CellStyleIcon />} lines={["セルの", "スタイル"]} drop="inline" />
          </Group>

          <Group w={145} pad={7} label="セル">
            <Big w={44} icon={<InsertIcon />} lines={["挿入"]} drop="below" />
            <Big w={44} icon={<DeleteIcon />} lines={["削除"]} drop="below" />
            <Big w={44} icon={<FormatIcon />} lines={["書式"]} drop="below" />
          </Group>

          <Group w={228} pad={11} label="編集">
            <SmallStack $w={105}>
              <Small icon={<SigmaIcon />} label="オート SUM" drop gap={9} />
              <Small icon={<FillDownIcon />} label="フィル" drop />
              <Small icon={<EraserIcon />} label="クリア" drop />
            </SmallStack>
            <Big w={60} icon={<SortIcon />} lines={["並べ替えと", "フィルター"]} drop="inline" />
            <Big w={48} icon={<FindIcon />} lines={["検索と", "選択"]} drop="inline" />
          </Group>

          <Group w={57} center label="アドイン">
            <Big w={50} icon={<AddinIcon />} lines={["アド", "イン"]} />
          </Group>

          <Group w={104} pad={3}>
            <Big w={52} icon={<AnalyzeIcon />} lines={["データ", "分析"]} />
            <Big w={40} icon={<CopilotIcon />} lines={["Copilot"]} />
          </Group>

          <Group w={67} center label="Excel Labs">
            <Big w={50} icon={<LabsIcon />} lines={["Excel", "Labs"]} />
          </Group>
          <CollapseButton aria-label="リボンを折りたたむ">
            <Svg w={10} h={6}><path d="m.5 5.500 4.500-4.500 4.500 4.500" strokeWidth="1.2" /></Svg>
          </CollapseButton>
        </Ribbon>

        <FormulaBar>
          <Field $w={198}>
            <input aria-label="名前ボックス" defaultValue="A12" />
            <button aria-label="名前の一覧"><Chevron size={11} /></button>
          </Field>
          <Dots><DotsIcon /></Dots>
          <FxField $w={85}>
            <button aria-label="キャンセル">
              <svg width="13" height="13" stroke="#b5b5b5" aria-hidden="true"><path d="m.5.5 12 12M12.500.5l-12 12" /></svg>
            </button>
            <button aria-label="入力">
              <svg width="16" height="12" stroke="#b5b5b5" fill="none" aria-hidden="true"><path d="m.5 6 5 5L15.500.5" /></svg>
            </button>
            <button aria-label="関数の挿入"><Fx>fx</Fx></button>
            <Chevron size={10} color="#8a8a8a" />
          </FxField>
          <Field $grow>
            <input aria-label="数式バー" />
            <button aria-label="数式バーの展開"><Chevron size={11} /></button>
          </Field>
        </FormulaBar>

        <SheetArea>
          <SheetClip><Sheet /></SheetClip>
          <VScroll>
            <button aria-label="上へ"><Triangle turn={0} /></button>
            <VTrack />
            <button aria-label="下へ"><Triangle turn={180} /></button>
          </VScroll>
          <Step $x={363} $y={233}>③</Step>
        </SheetArea>

        <SheetTabs>
          <TabNav aria-label="前のシート">
            <svg width="7" height="10" fill="none" stroke="#8a8a8a" strokeWidth="1.3" aria-hidden="true"><path d="M6 .5 1 5l5 4.500" /></svg>
          </TabNav>
          <TabNav aria-label="次のシート">
            <svg width="7" height="10" fill="none" stroke="#8a8a8a" strokeWidth="1.3" aria-hidden="true"><path d="m1 .5 5 4.500-5 4.500" /></svg>
          </TabNav>
          <SheetTab><span>Sheet1</span></SheetTab>
          <AddTab aria-label="新しいシート">
            <svg width="11" height="18" stroke="#333" aria-hidden="true"><path d="M5.500 3.500v11M0 9h11" /></svg>
          </AddTab>
          <Spacer />
          <DotsIcon />
          <HScroll>
            <button aria-label="左へ"><Triangle turn={-90} /></button>
            <HThumb />
            <button aria-label="右へ"><Triangle turn={90} /></button>
          </HScroll>
        </SheetTabs>

        <StatusBar>
          <span>準備完了</span>
          <Svg w={15} h={14}>
            <path d="M6 12.500H.5v-11h13V5M.5 4h13M3 6.500h3M3 9.500h2" />
            <circle cx="9.5" cy="9" r="4" />
            <circle cx="9.5" cy="9" r="1.5" fill={INK} />
          </Svg>
          <Spacer />
          {STATS.map(([name, value]) => (
            <span key={name}>
              {name}: <Figure>{value}</Figure>
            </span>
          ))}
          <Views>
            <ViewButton $on aria-label="標準">
              <Svg w={13} h={13}><path d="M.5.5h12v12H.5zM.5 4.500h12M.5 8.500h12M4.500.5v12M8.500.5v12" stroke="#222" /></Svg>
            </ViewButton>
            <ViewButton aria-label="ページ レイアウト">
              <Svg w={14} h={13}><path d="M.5.5h13v12H.5zM3.500 2.500h7v8h-7zM5 4.500h4M5 6.500h4M5 8.500h4" stroke="#222" /></Svg>
            </ViewButton>
            <ViewButton aria-label="改ページ プレビュー">
              <Svg w={14} h={13}><path d="M.5.5h13v12H.5zM4.500.5v7M9.500.5v7H.5" stroke="#222" /></Svg>
            </ViewButton>
          </Views>
          <Zoom>
            <button aria-label="縮小"><Svg w={8} h={9}><path d="M0 4.500h8" /></Svg></button>
            <input type="range" min="0" max="100" defaultValue="50" aria-label="ズーム" />
            <button aria-label="拡大"><Svg w={8} h={9}><path d="M0 4.500h8M4 .5v8" /></Svg></button>
          </Zoom>
          <Figure>100%</Figure>
        </StatusBar>
      </Window>
    </>
  );
}
